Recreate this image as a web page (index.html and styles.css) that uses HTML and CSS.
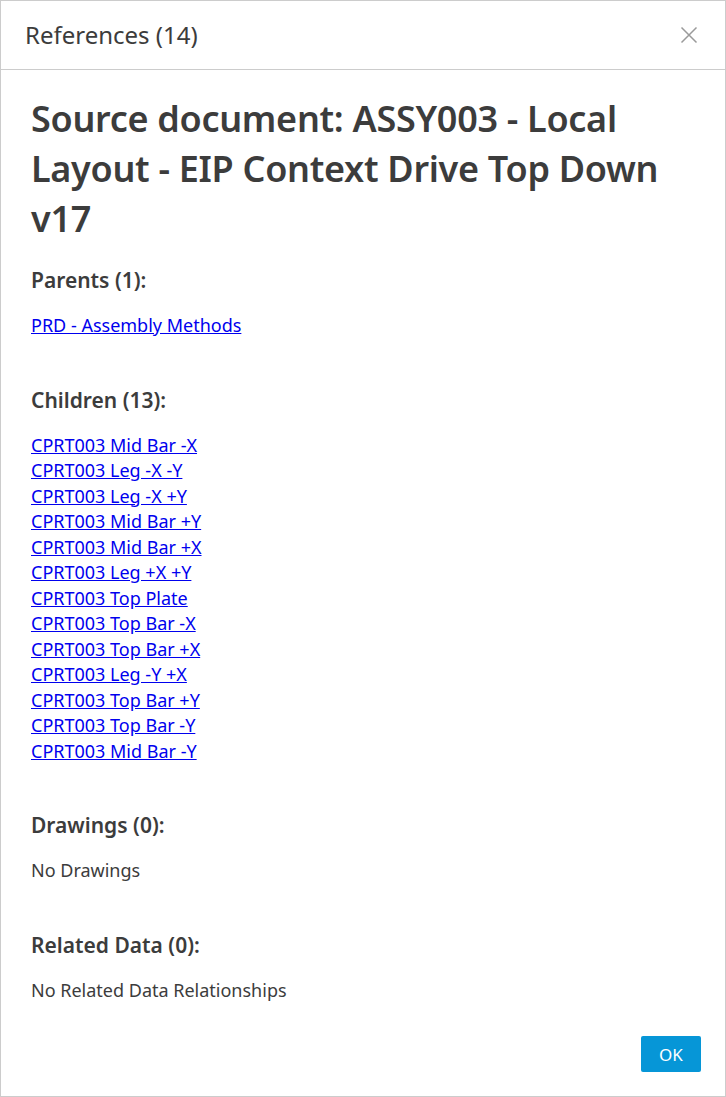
FILE: index.html
```html
<!DOCTYPE html>
<html>
<head>
<meta charset="utf-8">
<link rel="stylesheet" href="styles.css">
</head>
<body>
<div class="dialog">
  <div class="header">
    <div class="title">References (14)</div>
    <svg class="close" width="18" height="18" viewBox="0 0 18 18"><path d="M1.5 1.5 L16.5 16.5 M16.5 1.5 L1.5 16.5" stroke="#9a9a9a" stroke-width="1.5" fill="none"/></svg>
  </div>
  <div class="content">
    <h1 class="doc">Source document: ASSY003 - Local Layout - EIP Context Drive Top Down v17</h1>
    <div class="section">
      <h3 class="sec-title">Parents (1):</h3>
      <div class="list">
        <a href="#">PRD - Assembly Methods</a>
      </div>
    </div>
    <div class="section">
      <h3 class="sec-title">Children (13):</h3>
      <div class="list">
        <a href="#">CPRT003 Mid Bar -X</a>
        <a href="#">CPRT003 Leg -X -Y</a>
        <a href="#">CPRT003 Leg -X +Y</a>
        <a href="#">CPRT003 Mid Bar +Y</a>
        <a href="#">CPRT003 Mid Bar +X</a>
        <a href="#">CPRT003 Leg +X +Y</a>
        <a href="#">CPRT003 Top Plate</a>
        <a href="#">CPRT003 Top Bar -X</a>
        <a href="#">CPRT003 Top Bar +X</a>
        <a href="#">CPRT003 Leg -Y +X</a>
        <a href="#">CPRT003 Top Bar +Y</a>
        <a href="#">CPRT003 Top Bar -Y</a>
        <a href="#">CPRT003 Mid Bar -Y</a>
      </div>
    </div>
    <div class="section">
      <h3 class="sec-title">Drawings (0):</h3>
      <div class="list"><span class="empty">No Drawings</span></div>
    </div>
    <div class="section">
      <h3 class="sec-title">Related Data (0):</h3>
      <div class="list"><span class="empty">No Related Data Relationships</span></div>
    </div>
  </div>
  <div class="footer">
    <button class="ok">OK</button>
  </div>
</div>
</body>
</html>
```
FILE: styles.css
```css
html, body {
  margin: 0;
  padding: 0;
  background: #ffffff;
}
body {
  font-family: "Noto Sans", "Open Sans", sans-serif;
  color: #3c3c3c;
}
.dialog {
  width: 726px;
  height: 1097px;
  box-sizing: border-box;
  border: 1px solid #cccccc;
  display: flex;
  flex-direction: column;
}
.header {
  height: 67px;
  border-bottom: 1px solid #cccccc;
  display: flex;
  align-items: center;
  justify-content: space-between;
  padding: 0 27px 1px 24px;
}
.title {
  font-size: 24px;
  color: #3c3c3c;
}
.close {
  display: block;
}
.content {
  flex: 1;
  padding: 0 30px;
}
.doc {
  margin: 24px 0 0 0;
  font-size: 36px;
  line-height: 50px;
  font-weight: 600;
  color: #3c3c3c;
  letter-spacing: -0.3px;
}
.section {
  margin-top: 22px;
}
.section + .section {
  margin-top: 47px;
}
.sec-title {
  margin: 0;
  font-size: 21px;
  line-height: 28px;
  font-weight: 600;
  color: #3c3c3c;
}
.list {
  margin-top: 19px;
  display: flex;
  flex-direction: column;
  align-items: flex-start;
  font-size: 18px;
  line-height: 25.5px;
}
.list a {
  color: #0000ee;
  text-decoration: underline;
}
.empty {
  color: #3c3c3c;
}
.footer {
  display: flex;
  justify-content: flex-end;
  padding: 0 24px 24px 0;
}
.ok {
  width: 60px;
  height: 36px;
  border: none;
  border-radius: 2px;
  background: #0696d7;
  color: #ffffff;
  font-family: "Noto Sans", sans-serif;
  font-size: 17px;
  padding: 0;
}
```
